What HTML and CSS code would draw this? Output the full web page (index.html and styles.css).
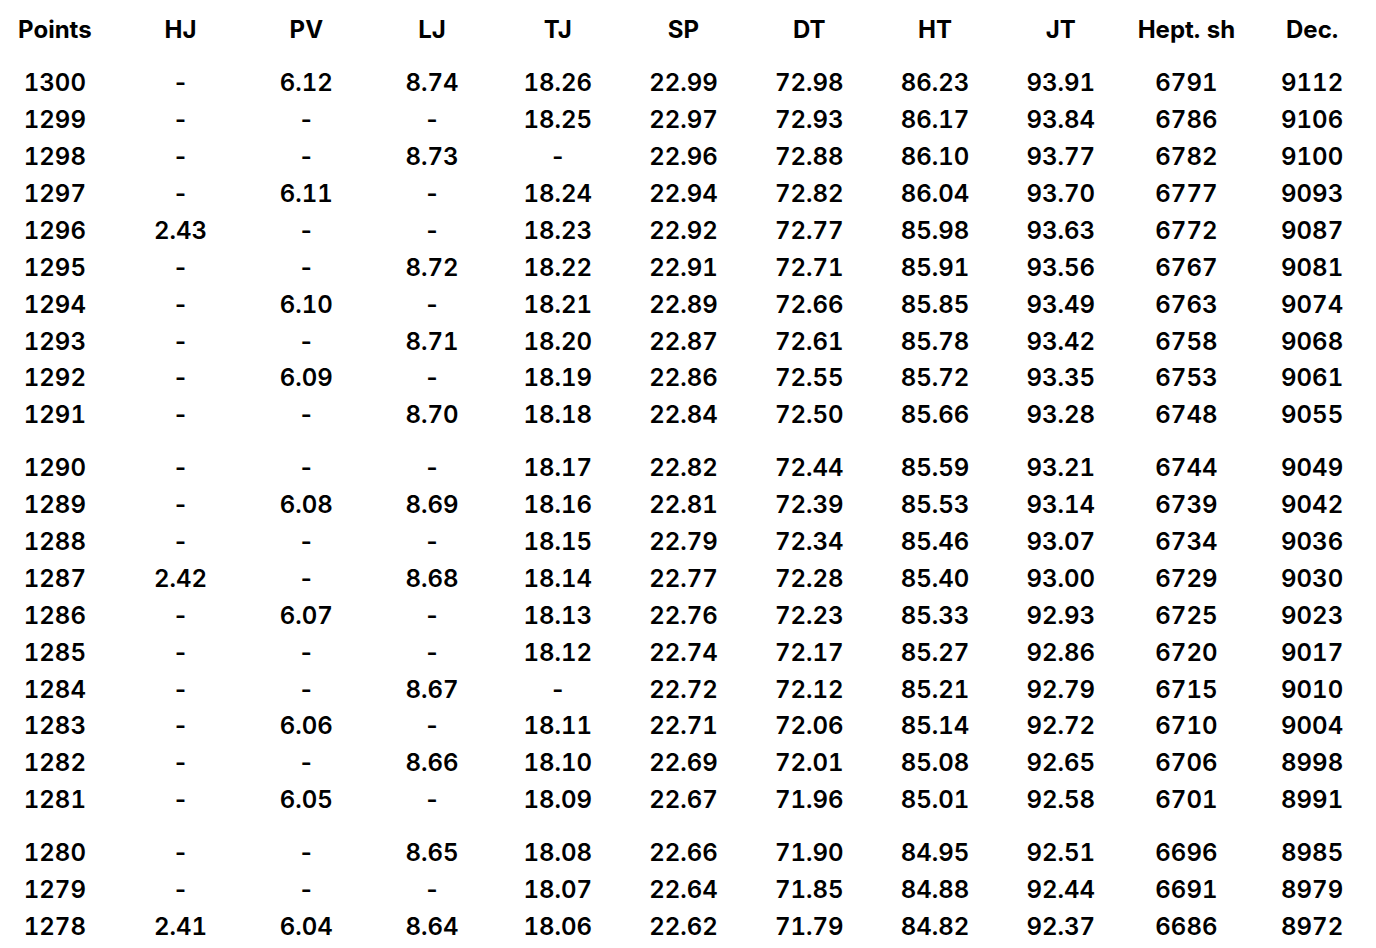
FILE: index.html
```html
<!DOCTYPE html>
<html>
<head>
<meta charset="utf-8">
<link rel="stylesheet" href="styles.css">
</head>
<body>
<div class="table">
  <div class="group head">
    <div class="row"><span>Points</span><span>HJ</span><span>PV</span><span>LJ</span><span>TJ</span><span>SP</span><span>DT</span><span>HT</span><span>JT</span><span>Hept. sh</span><span>Dec.</span></div>
  </div>
  <div class="group">
    <div class="row"><span>1300</span><span>-</span><span>6.12</span><span>8.74</span><span>18.26</span><span>22.99</span><span>72.98</span><span>86.23</span><span>93.91</span><span>6791</span><span>9112</span></div>
    <div class="row"><span>1299</span><span>-</span><span>-</span><span>-</span><span>18.25</span><span>22.97</span><span>72.93</span><span>86.17</span><span>93.84</span><span>6786</span><span>9106</span></div>
    <div class="row"><span>1298</span><span>-</span><span>-</span><span>8.73</span><span>-</span><span>22.96</span><span>72.88</span><span>86.10</span><span>93.77</span><span>6782</span><span>9100</span></div>
    <div class="row"><span>1297</span><span>-</span><span>6.11</span><span>-</span><span>18.24</span><span>22.94</span><span>72.82</span><span>86.04</span><span>93.70</span><span>6777</span><span>9093</span></div>
    <div class="row"><span>1296</span><span>2.43</span><span>-</span><span>-</span><span>18.23</span><span>22.92</span><span>72.77</span><span>85.98</span><span>93.63</span><span>6772</span><span>9087</span></div>
    <div class="row"><span>1295</span><span>-</span><span>-</span><span>8.72</span><span>18.22</span><span>22.91</span><span>72.71</span><span>85.91</span><span>93.56</span><span>6767</span><span>9081</span></div>
    <div class="row"><span>1294</span><span>-</span><span>6.10</span><span>-</span><span>18.21</span><span>22.89</span><span>72.66</span><span>85.85</span><span>93.49</span><span>6763</span><span>9074</span></div>
    <div class="row"><span>1293</span><span>-</span><span>-</span><span>8.71</span><span>18.20</span><span>22.87</span><span>72.61</span><span>85.78</span><span>93.42</span><span>6758</span><span>9068</span></div>
    <div class="row"><span>1292</span><span>-</span><span>6.09</span><span>-</span><span>18.19</span><span>22.86</span><span>72.55</span><span>85.72</span><span>93.35</span><span>6753</span><span>9061</span></div>
    <div class="row"><span>1291</span><span>-</span><span>-</span><span>8.70</span><span>18.18</span><span>22.84</span><span>72.50</span><span>85.66</span><span>93.28</span><span>6748</span><span>9055</span></div>
  </div>
  <div class="group">
    <div class="row"><span>1290</span><span>-</span><span>-</span><span>-</span><span>18.17</span><span>22.82</span><span>72.44</span><span>85.59</span><span>93.21</span><span>6744</span><span>9049</span></div>
    <div class="row"><span>1289</span><span>-</span><span>6.08</span><span>8.69</span><span>18.16</span><span>22.81</span><span>72.39</span><span>85.53</span><span>93.14</span><span>6739</span><span>9042</span></div>
    <div class="row"><span>1288</span><span>-</span><span>-</span><span>-</span><span>18.15</span><span>22.79</span><span>72.34</span><span>85.46</span><span>93.07</span><span>6734</span><span>9036</span></div>
    <div class="row"><span>1287</span><span>2.42</span><span>-</span><span>8.68</span><span>18.14</span><span>22.77</span><span>72.28</span><span>85.40</span><span>93.00</span><span>6729</span><span>9030</span></div>
    <div class="row"><span>1286</span><span>-</span><span>6.07</span><span>-</span><span>18.13</span><span>22.76</span><span>72.23</span><span>85.33</span><span>92.93</span><span>6725</span><span>9023</span></div>
    <div class="row"><span>1285</span><span>-</span><span>-</span><span>-</span><span>18.12</span><span>22.74</span><span>72.17</span><span>85.27</span><span>92.86</span><span>6720</span><span>9017</span></div>
    <div class="row"><span>1284</span><span>-</span><span>-</span><span>8.67</span><span>-</span><span>22.72</span><span>72.12</span><span>85.21</span><span>92.79</span><span>6715</span><span>9010</span></div>
    <div class="row"><span>1283</span><span>-</span><span>6.06</span><span>-</span><span>18.11</span><span>22.71</span><span>72.06</span><span>85.14</span><span>92.72</span><span>6710</span><span>9004</span></div>
    <div class="row"><span>1282</span><span>-</span><span>-</span><span>8.66</span><span>18.10</span><span>22.69</span><span>72.01</span><span>85.08</span><span>92.65</span><span>6706</span><span>8998</span></div>
    <div class="row"><span>1281</span><span>-</span><span>6.05</span><span>-</span><span>18.09</span><span>22.67</span><span>71.96</span><span>85.01</span><span>92.58</span><span>6701</span><span>8991</span></div>
  </div>
  <div class="group">
    <div class="row"><span>1280</span><span>-</span><span>-</span><span>8.65</span><span>18.08</span><span>22.66</span><span>71.90</span><span>84.95</span><span>92.51</span><span>6696</span><span>8985</span></div>
    <div class="row"><span>1279</span><span>-</span><span>-</span><span>-</span><span>18.07</span><span>22.64</span><span>71.85</span><span>84.88</span><span>92.44</span><span>6691</span><span>8979</span></div>
    <div class="row"><span>1278</span><span>2.41</span><span>6.04</span><span>8.64</span><span>18.06</span><span>22.62</span><span>71.79</span><span>84.82</span><span>92.37</span><span>6686</span><span>8972</span></div>
  </div>
</div>
</body>
</html>
```

FILE: styles.css
```css
html, body {
  margin: 0;
  padding: 0;
  background: #fff;
  overflow: hidden;
}
body {
  font-family: "Inter", "Liberation Sans", sans-serif;
  color: #000;
}
.table {
  width: 1383px;
  margin-left: -8px;
  padding-top: 11.5px;
  display: flex;
  flex-direction: column;
  gap: 16px;
}
.row {
  display: grid;
  grid-template-columns: repeat(11, 1fr);
  height: 36.9px;
  align-items: center;
  font-size: 24px;
  font-weight: 600;
  font-variant-numeric: tabular-nums;
  letter-spacing: 0;
}
.row span {
  text-align: center;
  white-space: nowrap;
}
.head .row {
  font-weight: 700;
}
```
